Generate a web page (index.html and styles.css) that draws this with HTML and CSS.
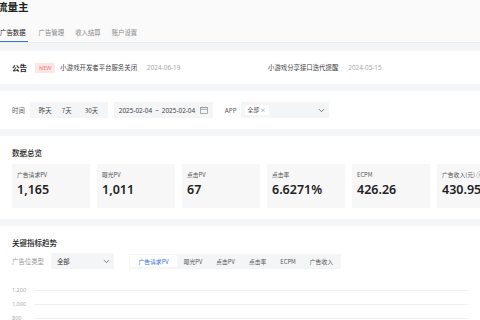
FILE: index.html
```html
<!DOCTYPE html>
<html lang="zh">
<head>
<meta charset="utf-8">
<link rel="stylesheet" href="styles.css">
</head>
<body>
<div class="page">
  <header class="header">
    <h1 class="title">流量主</h1>
    <nav class="tabs">
      <span class="tab active">广告数据</span>
      <span class="tab">广告管理</span>
      <span class="tab">收入结算</span>
      <span class="tab">账户设置</span>
    </nav>
  </header>

  <section class="card notice">
    <span class="notice-label">公告</span>
    <div class="notice-item first">
      <span class="badge">NEW</span>
      <span class="notice-text">小游戏开发者平台服务关闭</span>
      <span class="notice-date">2024-06-19</span>
    </div>
    <div class="notice-item second">
      <span class="notice-text">小游戏分享接口迭代提醒</span>
      <span class="notice-date">2024-05-15</span>
    </div>
  </section>

  <section class="card filters">
    <span class="f-label">时间</span>
    <div class="seg">
      <span class="seg-item">昨天</span>
      <span class="seg-item">7天</span>
      <span class="seg-item">30天</span>
    </div>
    <div class="range">
      <span>2025-02-04</span><span class="tilde">~</span><span>2025-02-04</span>
      <svg class="cal" width="8" height="8" viewBox="0 0 8 8"><rect x="0.5" y="1.5" width="7" height="6" fill="none" stroke="#9a9a9a" stroke-width="0.8"/><line x1="0.5" y1="3.3" x2="7.5" y2="3.3" stroke="#9a9a9a" stroke-width="0.8"/><line x1="2.3" y1="0.5" x2="2.3" y2="2.2" stroke="#9a9a9a" stroke-width="0.8"/><line x1="5.7" y1="0.5" x2="5.7" y2="2.2" stroke="#9a9a9a" stroke-width="0.8"/></svg>
    </div>
    <span class="f-label app">APP</span>
    <div class="select app-select">
      <span class="tag">全部 <span class="x">×</span></span>
      <svg class="chev" width="7" height="5" viewBox="0 0 7 5"><path d="M1 1.2 L3.5 3.7 L6 1.2" fill="none" stroke="#666" stroke-width="0.9"/></svg>
    </div>
  </section>

  <section class="card overview">
    <h2 class="sec-title">数据总览</h2>
    <div class="stats">
      <div class="stat"><div class="stat-label">广告请求PV</div><div class="stat-value">1,165</div></div>
      <div class="stat"><div class="stat-label">曝光PV</div><div class="stat-value">1,011</div></div>
      <div class="stat"><div class="stat-label">点击PV</div><div class="stat-value">67</div></div>
      <div class="stat"><div class="stat-label">点击率</div><div class="stat-value">6.6271%</div></div>
      <div class="stat"><div class="stat-label">ECPM</div><div class="stat-value">426.26</div></div>
      <div class="stat"><div class="stat-label">广告收入(元) ⓘ</div><div class="stat-value">430.95</div></div>
    </div>
  </section>

  <section class="card trend">
    <h2 class="sec-title">关键指标趋势</h2>
    <div class="trend-controls">
      <span class="f-label muted">广告位类型</span>
      <div class="select type-select">
        <span class="sel-text">全部</span>
        <svg class="chev" width="7" height="5" viewBox="0 0 7 5"><path d="M1 1.2 L3.5 3.7 L6 1.2" fill="none" stroke="#666" stroke-width="0.9"/></svg>
      </div>
      <div class="metric-tabs">
        <span class="mtab active">广告请求PV</span>
        <span class="mtab">曝光PV</span>
        <span class="mtab">点击PV</span>
        <span class="mtab">点击率</span>
        <span class="mtab">ECPM</span>
        <span class="mtab">广告收入</span>
      </div>
    </div>
    <div class="chart">
      <div class="grid-row"><span class="ylabel">1,200</span><span class="gline"></span></div>
      <div class="grid-row"><span class="ylabel">1,000</span><span class="gline"></span></div>
      <div class="grid-row"><span class="ylabel">800</span><span class="gline"></span></div>
    </div>
  </section>
</div>
</body>
</html>
```

FILE: styles.css
```css
* { box-sizing: border-box; margin: 0; padding: 0; }
html, body { width: 480px; height: 320px; overflow: hidden; }
body {
  background: #f4f5f6;
  font-family: "Noto Sans CJK SC", "Noto Sans", sans-serif;
  color: #333;
  font-size: 6.4px;
}
.page { display: flex; flex-direction: column; gap: 7px; }

.header {
  background: #fafafa;
  height: 43px;
  border-bottom: 1px solid #ececec;
  display: flex;
  flex-direction: column;
  margin-left: -3px;
}
.title {
  font-size: 10.5px;
  font-weight: 700;
  color: #222;
  line-height: 14px;
}
.tabs { display: flex; gap: 11px; margin-top: 10px; }
.tab { font-size: 6.4px; color: #888; line-height: 17px; height: 18px; }
.tab.active { color: #222; border-bottom: 1.5px solid #3a70d8; padding-left: 3px; padding-right: 2px; }

.card { background: #fff; padding: 0 12px; }

.notice { height: 33px; display: flex; align-items: center; margin-top: 1px; }
.notice-label { font-size: 7.5px; font-weight: 700; color: #222; width: 23px; }
.notice-item { display: flex; align-items: center; white-space: nowrap; }
.notice-item.first { width: 233px; }
.badge { background: #fde6e6; color: #f27a7a; font-size: 5.5px; padding: 1px 4px; border-radius: 1px; margin-right: 5px; font-family: "Noto Sans", sans-serif; }
.notice-text { color: #444; }
.notice-date { color: #aaa; margin-left: 10px; font-family: "Noto Sans", sans-serif; }

.filters { height: 38px; display: flex; align-items: center; white-space: nowrap; }
.f-label { color: #555; margin-right: 5px; }
.f-label.app { margin-left: 12px; font-family: "Noto Sans", sans-serif; margin-right: 4px; }
.seg { background: #f4f5f6; display: flex; height: 16px; align-items: center; width: 78px; flex: none; padding-left: 9px; }
.seg-item { color: #444; width: 26px; }
.range { background: #f4f5f6; height: 16px; display: flex; align-items: center; margin-left: 6px; width: 99px; flex: none; padding: 0 5px 0 5px; font-family: "Noto Sans", sans-serif; font-size: 6.4px; color: #444; }
.tilde { margin: 0 3px; }
.cal { margin-left: auto; flex: none; }
.select { background: #f4f5f6; height: 16px; display: flex; align-items: center; padding: 0 4px; flex: none; }
.app-select { width: 88px; }
.tag { background: #fff; padding: 1px 3px; font-size: 5.6px; color: #333; }
.x { color: #777; }
.chev { margin-left: auto; }

.overview { height: 83px; display: flex; flex-direction: column; }
.sec-title { font-size: 7.5px; font-weight: 500; color: #222; margin-top: 12px; line-height: 10px; }
.stats { display: flex; gap: 7px; margin-top: 6px; }
.stat { background: #f7f7f8; width: 78px; flex: none; height: 44px; padding: 7px 5px 0; }
.stat-label { font-size: 5.8px; color: #555; line-height: 8px; white-space: nowrap; }
.stat-value { font-family: "Noto Sans", sans-serif; font-size: 12.5px; font-weight: 600; color: #222; line-height: 16px; margin-top: 3px; white-space: nowrap; }

.trend { flex: 1; height: 100px; display: flex; flex-direction: column; }
.trend-controls { display: flex; align-items: center; margin-top: 5px; white-space: nowrap; }
.f-label.muted { color: #999; margin-right: 7px; }
.type-select { width: 63px; padding-left: 6px; }
.sel-text { color: #333; }
.metric-tabs { display: flex; margin-left: 15px; background: #f4f5f6; height: 15px; padding: 1.5px; align-items: stretch; }
.mtab { padding: 0 7px; display: flex; align-items: center; color: #555; font-size: 5.8px; }
.mtab.active { background: #fff; color: #3a70d8; padding: 0 8px; }
.chart { margin-top: 17px; display: flex; flex-direction: column; gap: 6px; }
.grid-row { display: flex; align-items: center; height: 8px; gap: 6px; }
.ylabel { font-family: "Noto Sans", sans-serif; font-size: 5.5px; color: #aaa; width: 16px; }
.gline { flex: 1; height: 1px; background: #f0f0f0; }
```
